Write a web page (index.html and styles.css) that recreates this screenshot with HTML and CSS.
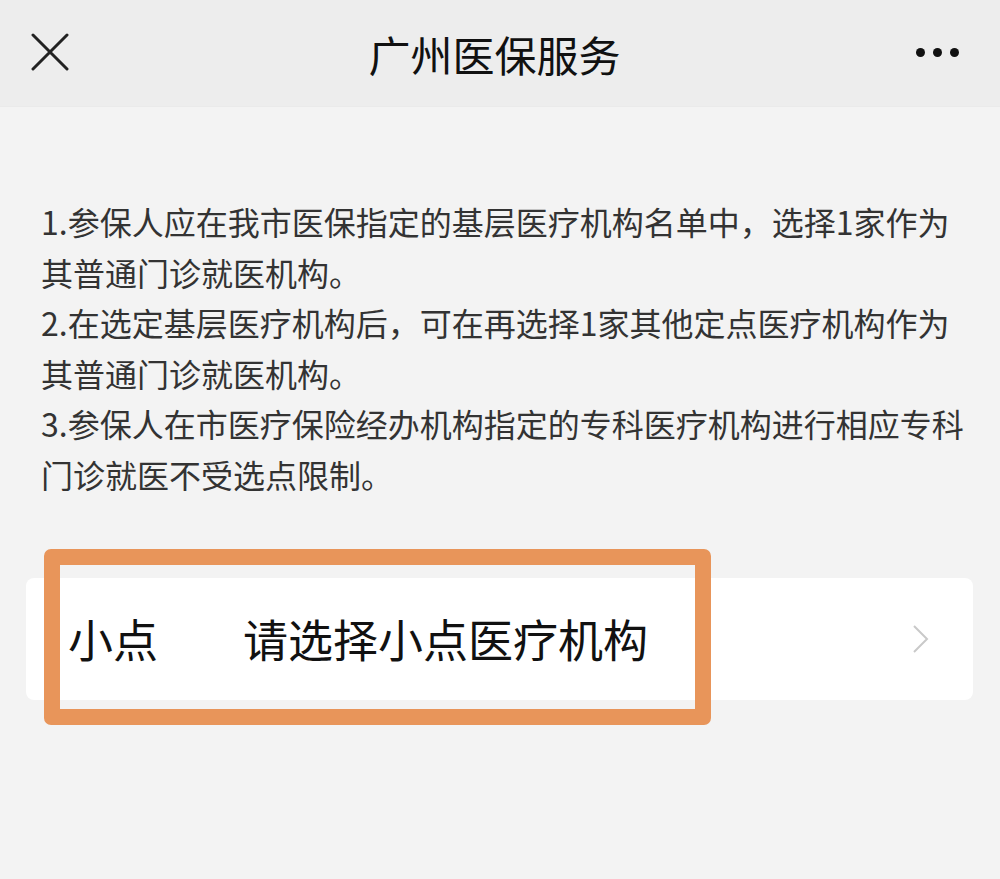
FILE: index.html
```html
<!DOCTYPE html>
<html lang="zh-CN">
<head>
  <meta charset="UTF-8" />
  <meta name="viewport" content="width=device-width, initial-scale=1.0" />
  <title>广州医保服务</title>
  <link rel="stylesheet" href="styles.css">
</head>
<body>
  <header class="topbar">
    <button class="close-btn" aria-label="关闭">
      <svg width="38" height="38" viewBox="0 0 38 38">
        <path d="M2 2 L36 36 M36 2 L2 36" stroke="#222" stroke-width="3" fill="none" stroke-linecap="round"/>
      </svg>
    </button>
    <div class="title">广州医保服务</div>
    <button class="more-btn" aria-label="更多">
      <span></span><span></span><span></span>
    </button>
  </header>

  <section class="notes">
    <p>1.参保人应在我市医保指定的基层医疗机构名单中，选择1家作为其普通门诊就医机构。</p>
    <p>2.在选定基层医疗机构后，可在再选择1家其他定点医疗机构作为其普通门诊就医机构。</p>
    <p>3.参保人在市医疗保险经办机构指定的专科医疗机构进行相应专科门诊就医不受选点限制。</p>
  </section>

  <div class="pick-row">
    <span class="pick-label">小点</span>
    <span class="pick-value">请选择小点医疗机构</span>
    <svg class="chevron" width="18" height="30" viewBox="0 0 18 30">
      <path d="M2 2 L15 15 L2 28" stroke="#c9c9c9" stroke-width="2" fill="none"/>
    </svg>
    <div class="highlight"></div>
  </div>
</body>
</html>
```

FILE: styles.css
```css
* { margin: 0; padding: 0; box-sizing: border-box; }
body {
  font-family: "Noto Sans CJK SC", "Noto Sans", sans-serif;
  background-color: #f3f3f3;
  color: #333;
  width: 1000px;
  min-height: 879px;
}
.topbar {
  height: 107px;
  background-color: #ededed;
  display: flex;
  align-items: center;
  justify-content: space-between;
  padding: 0 40px 0 31px;
  border-bottom: 1px solid #eaeaea;
}
.topbar button {
  background: none;
  border: none;
  cursor: pointer;
}
.close-btn { width: 38px; height: 38px; margin-top: -2px; }
.close-btn svg { display: block; }
.title {
  font-size: 42px;
  font-weight: 400;
  color: #111;
  margin-left: 4px;
}
.more-btn {
  display: flex;
  gap: 8px;
  width: 44px;
  margin-top: -2px;
}
.more-btn span {
  width: 9px;
  height: 9px;
  border-radius: 50%;
  background-color: #111;
}
.notes {
  padding: 89px 30px 0 41px;
  font-size: 32px;
  line-height: 50.6px;
  color: #333;
}
.pick-row {
  position: relative;
  margin: 78px 27px 0 26px;
  height: 122px;
  background-color: #fff;
  border-radius: 8px;
  display: flex;
  align-items: center;
  padding: 0 43px 0 42px;
  font-size: 45px;
  color: #111;
}
.pick-label { width: 175px; }
.pick-value { flex: 1; }
.chevron { display: block; }
.highlight {
  position: absolute;
  left: 18px;
  top: -29px;
  width: 667px;
  height: 176px;
  border: 16px solid #e8955a;
  border-radius: 7px;
}
```
